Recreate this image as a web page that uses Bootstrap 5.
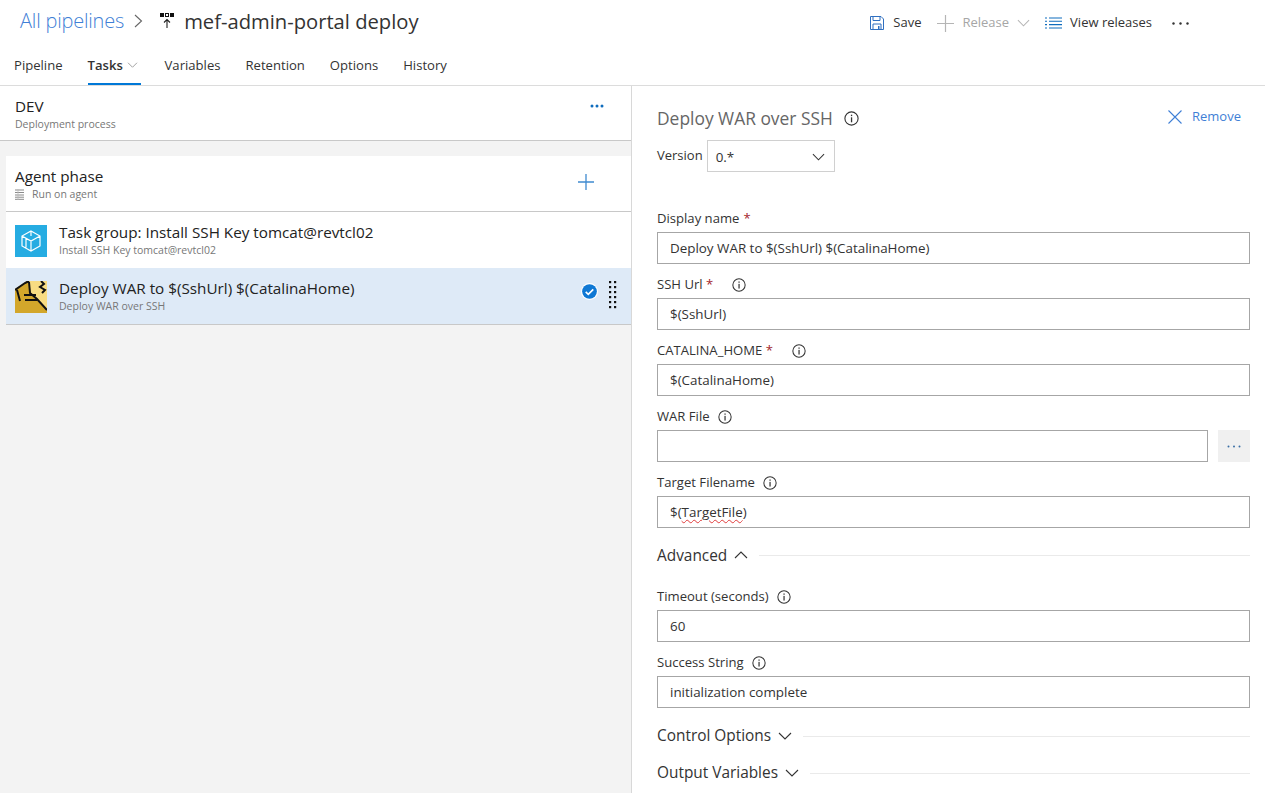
<!DOCTYPE html>
<html lang="en">
<head>
  <meta charset="UTF-8" />
  <meta name="viewport" content="width=device-width, initial-scale=1" />
  <title>mef-admin-portal deploy</title>
  <link href="https://cdn.jsdelivr.net/npm/bootstrap@5.3.3/dist/css/bootstrap.min.css" rel="stylesheet">
  <style>
    html, body { height: 100%; overflow: hidden; }
    body { font-family: "Open Sans", "Noto Sans", sans-serif; font-size: 13px; color: #333; background: #fff; }
    svg { display: block; flex: none; }

    .top-title { height: 46px; padding: 0 76px 4px 20px; }
    .crumb { font-size: 20px; font-weight: 300; color: #3f7fd6; letter-spacing: -.2px; }
    .crumb-sep { margin: 0 17px 0 10px; }
    .pipe-name { font-size: 20.2px; color: #333; margin-left: 9px; }
    .act { color: #333; }
    .act-off { color: #a6a6a6; }
    .acts { gap: 8px; margin-top: 4px; }
    .act-save { margin-right: 1px; }
    .act-plus { margin-left: 8px; }
    .act-list { margin-left: 7px; }
    .act-more { margin-left: 12px; }

    .tabbar { height: 40px; padding-left: 14px; gap: 25px; border-bottom: 1px solid #dcdcdc; }
    .tab-item { color: #333; height: 39px; line-height: 38px; padding: 0; font-size: 13.1px; }
    .tab-item:hover { color: #333; }
    .tab-on { font-weight: 600; width: 53px; margin-right: -1px; border-bottom: 2px solid #0078d7; }

    .panes { height: calc(100% - 86px); }
    .left-pane { width: 632px; background: #f3f3f3; border-right: 1px solid #d8d8d8; }
    .dev-row { height: 55px; background: #fff; padding: 10px 27px 0 15px; border-bottom: 1px solid #c8c8c8; margin-bottom: 15px; }
    .row-main { font-size: 15.25px; line-height: 21px; color: #222; }
    .row-sub { font-size: 10.5px; line-height: 14px; color: #777; }
    .phase-row { height: 56px; background: #fff; margin-left: 6px; padding: 10px 37px 0 9px; border-bottom: 1px solid #c8c8c8; }
    .task-row { height: 56px; background: #fff; margin-left: 6px; padding: 13px 14px 0 9px; gap: 12px; }
    .task-on { height: 57px; background: #deeaf7; border-bottom: 1px solid #c8c8c8; }
    .task-text { margin-top: -3px; }
    .task-check { margin: 2px -1px 0 0; }

    .right-pane { padding: 0 15px 0 25px; min-width: 0; }
    .task-title { font-size: 17.4px; font-weight: 400; color: #666; margin: 0; }
    .title-row { height: 54px; padding-top: 9px; }
    .title-group { gap: 11px; margin-top: 2px; }
    .remove-btn { color: #3f7fd6; margin: 0 9px 2px 0; gap: 10px; }
    .ver-row { gap: 4px; height: 58px; }
    .ver-label { line-height: 30px; }
    .ver-select { width: 128px; height: 32px; border: 1px solid #d0d0d0; padding: 2px 9px 0 8px; font-size: 13.4px; }

    .fld-label { height: 34px; padding-top: 10px; margin: 0; line-height: 20px; gap: 4px; font-size: 13.1px; }
    .fld-label-wide { gap: 19px; }
    .req { color: #a4262c; }
    .fld-input { height: 32px; border-radius: 0; border: 1px solid #a6a6a6; padding: 0 12px; font-size: 13.4px; color: #333; line-height: 30px; }
    .fld-input:focus { border-color: #a6a6a6; box-shadow: none; }
    .squiggle { text-decoration: underline wavy #e03c3c 1px; text-underline-offset: 2px; }
    .more-btn { width: 32px; height: 32px; margin-left: 10px; background: #f0f0f0; border: 0; border-radius: 0; padding: 0; }

    .sect { font-size: 15.4px; color: #333; line-height: 20px; gap: 7px; height: 20px; }
    .sect-line { height: 1px; background: #eaeaea; margin-left: 4px; }
    .sect-adv { margin-top: 17px; margin-bottom: 11px; }
    .sect-adv span { padding-top: 1px; }
    .sect-ctl { margin-top: 18px; }
    .sect-out { margin-top: 17px; }
  </style>
</head>
<body>
  <svg width="0" height="0" class="position-absolute">
    <symbol id="ic-info" viewBox="0 0 15 15">
      <circle cx="7.5" cy="7.5" r="6.6" fill="none" stroke="#333" stroke-width="1.1" />
      <rect x="6.9" y="6.3" width="1.3" height="5" fill="#333" />
      <rect x="6.9" y="3.7" width="1.3" height="1.4" fill="#333" />
    </symbol>
    <symbol id="ic-down" viewBox="0 0 14 8">
      <path d="M1 1l6 6 6-6" fill="none" stroke="#333" stroke-width="1.1" />
    </symbol>
    <symbol id="ic-up" viewBox="0 0 14 8">
      <path d="M1 7l6-6 6 6" fill="none" stroke="#333" stroke-width="1.1" />
    </symbol>
  </svg>

  <div class="top-title d-flex align-items-center justify-content-between">
    <div class="d-flex align-items-center">
      <a class="crumb text-decoration-none" href="#">All pipelines</a>
      <svg class="crumb-sep" width="9" height="14" viewBox="0 0 9 14"><path d="M1 1l6.5 6L1 13" fill="none" stroke="#666" stroke-width="1.1" /></svg>
      <svg width="15" height="15" viewBox="0 0 15 15">
        <rect x="0" y="0" width="4" height="4" fill="#111" /><rect x="5.5" y="0.5" width="3" height="3" fill="none" stroke="#111" /><rect x="10" y="0" width="4" height="4" fill="#111" />
        <path d="M7 15V6.500M4 9.500l3-3 3 3" fill="none" stroke="#222" stroke-width="1.100" />
      </svg>
      <span class="pipe-name">mef-admin-portal deploy</span>
    </div>
    <div class="acts d-flex align-items-center">
      <svg class="act-save" width="14" height="14" viewBox="0 0 14 14"><path d="M.5.5h10.500l2.500 2.500v10.500H.5z" fill="none" stroke="#2f6fc0" /><path d="M3 .5v4h7v-4M3 13.500V8h8v5.500" fill="none" stroke="#2f6fc0" /><rect x="8" y="10" width="1.500" height="3" fill="#2f6fc0" /></svg>
      <span class="act">Save</span>
      <svg class="act-plus" width="17" height="17" viewBox="0 0 17 17"><path d="M8.500 0v17M0 8.500h17" stroke="#b5b5b5" stroke-width="1.200" /></svg>
      <span class="act act-off">Release</span>
      <svg width="13" height="8" viewBox="0 0 14 8"><path d="M1 1l6 6 6-6" fill="none" stroke="#b5b5b5" stroke-width="1.100" /></svg>
      <svg class="act-list" width="17" height="12" viewBox="0 0 17 12"><path d="M0 1h2M4 1h13M0 4.300h2M4 4.300h13M0 7.600h2M4 7.600h13M0 11h2M4 11h13" stroke="#0f6cbd" stroke-width="1.100" /></svg>
      <span class="act">View releases</span>
      <svg class="act-more" width="17" height="3" viewBox="0 0 17 3"><circle cx="1.500" cy="1.500" r="1.200" fill="#333" /><circle cx="8.500" cy="1.500" r="1.200" fill="#333" /><circle cx="15.500" cy="1.500" r="1.200" fill="#333" /></svg>
    </div>
  </div>

  <nav class="tabbar nav">
    <a class="tab-item nav-link" href="#">Pipeline</a>
    <a class="tab-item tab-on nav-link d-flex align-items-center gap-1" href="#">Tasks
      <svg width="11" height="6" viewBox="0 0 14 8"><path d="M1 1l6 6 6-6" fill="none" stroke="#999" stroke-width="1.200" /></svg>
    </a>
    <a class="tab-item nav-link" href="#">Variables</a>
    <a class="tab-item nav-link" href="#">Retention</a>
    <a class="tab-item nav-link" href="#">Options</a>
    <a class="tab-item nav-link" href="#">History</a>
  </nav>

  <div class="panes d-flex">
    <div class="left-pane flex-shrink-0">
      <div class="dev-row d-flex justify-content-between">
        <div>
          <div class="row-main">DEV</div>
          <div class="row-sub">Deployment process</div>
        </div>
        <svg class="mt-2" width="14" height="4" viewBox="0 0 14 4"><circle cx="2" cy="2" r="1.500" fill="#0f6cbd" /><circle cx="7" cy="2" r="1.500" fill="#0f6cbd" /><circle cx="12" cy="2" r="1.500" fill="#0f6cbd" /></svg>
      </div>

      <div class="phase-row d-flex justify-content-between">
        <div>
          <div class="row-main">Agent phase</div>
          <div class="row-sub d-flex align-items-center gap-2">
            <svg width="9" height="11" viewBox="0 0 9 11"><path d="M0 1h9M0 3.500h9M0 6h9M0 8.200h9M0 10.300h9" stroke="#8a8a8a" /><path d="M3 0v11" stroke="#bbb" stroke-width=".8" /></svg>
            Run on agent
          </div>
        </div>
        <svg class="mt-2" width="16" height="16" viewBox="0 0 16 16"><path d="M8 0v16M0 8h16" stroke="#3f8ad0" stroke-width="1.300" /></svg>
      </div>

      <div class="task-row d-flex">
        <svg width="32" height="32" viewBox="0 0 32 32">
          <rect width="32" height="32" fill="#26ace2" />
          <path d="M16 6l9 5v10l-9 5-9-5V11z M7 11l9 5 9-5 M16 16v10 M16 6v5 M11 13.500v9" fill="none" stroke="#fff" stroke-width="1.200" />
        </svg>
        <div class="task-text">
          <div class="row-main">Task group: Install SSH Key tomcat@revtcl02</div>
          <div class="row-sub">Install SSH Key tomcat@revtcl02</div>
        </div>
      </div>

      <div class="task-row task-on d-flex">
        <svg width="32" height="32" viewBox="0 0 32 32">
          <rect width="32" height="32" fill="#d3a72b" />
          <path d="M0 0h12L0 8z" fill="#deeaf7" />
          <path d="M14 0h18v28L22 18l-6-5z" fill="#f8dc82" />
          <path d="M0 9l10-7 4-2M2 9l3 11M14 1l1 11 7 6 10 11M9 14h12M10 19h12M26 0l3 3-4 3 5 3-3 3" fill="none" stroke="#111" stroke-width="2" />
        </svg>
        <div class="task-text flex-grow-1">
          <div class="row-main">Deploy WAR to $(SshUrl) $(CatalinaHome)</div>
          <div class="row-sub">Deploy WAR over SSH</div>
        </div>
        <svg class="task-check" width="17" height="17" viewBox="0 0 18 18">
          <circle cx="9" cy="9" r="9" fill="#fff" /><circle cx="9" cy="9" r="7.800" fill="#0f78d4" />
          <path d="M5 9.500l2.700 2.500L13 6.800" fill="none" stroke="#fff" stroke-width="1.800" />
        </svg>
        <svg width="8" height="29" viewBox="0 0 8 29" fill="#111">
          <rect x="0" y="0" width="2.200" height="2.200" /><rect x="5" y="0" width="2.200" height="2.200" />
          <rect x="0" y="5" width="2.200" height="2.200" /><rect x="5" y="5" width="2.200" height="2.200" />
          <rect x="0" y="10" width="2.200" height="2.200" /><rect x="5" y="10" width="2.200" height="2.200" />
          <rect x="0" y="15" width="2.200" height="2.200" /><rect x="5" y="15" width="2.200" height="2.200" />
          <rect x="0" y="20" width="2.200" height="2.200" /><rect x="5" y="20" width="2.200" height="2.200" />
          <rect x="0" y="25" width="2.200" height="2.200" /><rect x="5" y="25" width="2.200" height="2.200" />
        </svg>
      </div>
    </div>

    <div class="right-pane flex-grow-1">
      <div class="title-row d-flex justify-content-between align-items-center">
        <div class="title-group d-flex align-items-center">
          <h2 class="task-title">Deploy WAR over SSH</h2>
          <svg width="15" height="15"><use href="#ic-info" /></svg>
        </div>
        <a class="remove-btn d-flex align-items-center text-decoration-none" href="#">
          <svg width="14" height="14" viewBox="0 0 14 14"><path d="M.5.5l13 13M13.500.5l-13 13" stroke="#3f7fd6" stroke-width="1.100" /></svg>
          Remove
        </a>
      </div>

      <div class="ver-row d-flex">
        <span class="ver-label">Version</span>
        <div class="ver-select d-flex align-items-center justify-content-between">
          <span>0.*</span>
          <svg width="13" height="8"><use href="#ic-down" /></svg>
        </div>
      </div>

      <label class="fld-label d-flex">Display name <span class="req">*</span></label>
      <input class="form-control fld-input" type="text" value="Deploy WAR to $(SshUrl) $(CatalinaHome)">

      <label class="fld-label fld-label-wide d-flex align-items-start">
        <span>SSH Url <span class="req">*</span></span>
        <svg class="mt-1" width="14" height="14"><use href="#ic-info" /></svg>
      </label>
      <input class="form-control fld-input" type="text" value="$(SshUrl)">

      <label class="fld-label fld-label-wide d-flex align-items-start">
        <span>CATALINA_HOME <span class="req">*</span></span>
        <svg class="mt-1" width="14" height="14"><use href="#ic-info" /></svg>
      </label>
      <input class="form-control fld-input" type="text" value="$(CatalinaHome)">

      <label class="fld-label d-flex align-items-start gap-2">
        WAR File
        <svg class="mt-1" width="14" height="14"><use href="#ic-info" /></svg>
      </label>
      <div class="d-flex">
        <input class="form-control fld-input" type="text" value="">
        <button class="btn more-btn d-flex align-items-center justify-content-center flex-shrink-0" type="button">
          <svg width="14" height="3" viewBox="0 0 14 3"><circle cx="1.500" cy="1.500" r="1" fill="#3a6ea5" /><circle cx="7" cy="1.500" r="1" fill="#3a6ea5" /><circle cx="12.500" cy="1.500" r="1" fill="#3a6ea5" /></svg>
        </button>
      </div>

      <label class="fld-label d-flex align-items-start gap-2">
        Target Filename
        <svg class="mt-1" width="14" height="14"><use href="#ic-info" /></svg>
      </label>
      <div class="form-control fld-input">$(<span class="squiggle">TargetFile</span>)</div>

      <div class="sect sect-adv d-flex align-items-center">
        <span>Advanced</span>
        <svg width="14" height="8"><use href="#ic-up" /></svg>
        <div class="sect-line flex-grow-1"></div>
      </div>

      <label class="fld-label d-flex align-items-start gap-2">
        Timeout (seconds)
        <svg class="mt-1" width="14" height="14"><use href="#ic-info" /></svg>
      </label>
      <input class="form-control fld-input" type="text" value="60">

      <label class="fld-label d-flex align-items-start gap-2">
        Success String
        <svg class="mt-1" width="14" height="14"><use href="#ic-info" /></svg>
      </label>
      <input class="form-control fld-input" type="text" value="initialization complete">

      <div class="sect sect-ctl d-flex align-items-center">
        <span>Control Options</span>
        <svg width="14" height="8"><use href="#ic-down" /></svg>
        <div class="sect-line flex-grow-1"></div>
      </div>
      <div class="sect sect-out d-flex align-items-center">
        <span>Output Variables</span>
        <svg width="14" height="8"><use href="#ic-down" /></svg>
        <div class="sect-line flex-grow-1"></div>
      </div>
    </div>
  </div>

  <script src="https://cdn.jsdelivr.net/npm/bootstrap@5.3.3/dist/js/bootstrap.bundle.min.js"></script>
</body>
</html>
